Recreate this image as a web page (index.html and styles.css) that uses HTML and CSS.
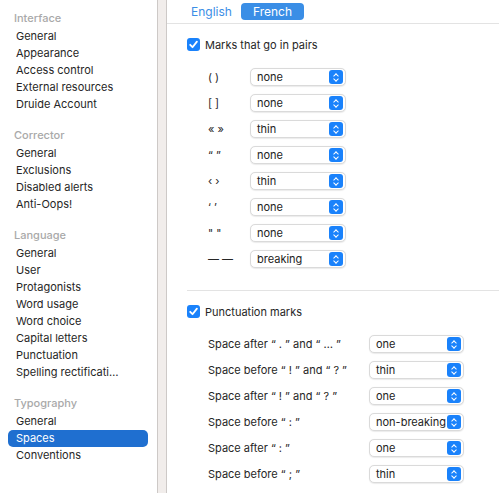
FILE: index.html
```html
<!DOCTYPE html>
<html>
<head>
<meta charset="utf-8">
<link rel="stylesheet" href="styles.css">
</head>
<body>
<div class="window">
  <nav class="sidebar">
    <div class="group">
      <div class="group-title">Interface</div>
      <div class="item">General</div>
      <div class="item">Appearance</div>
      <div class="item">Access control</div>
      <div class="item">External resources</div>
      <div class="item">Druide Account</div>
    </div>
    <div class="group">
      <div class="group-title">Corrector</div>
      <div class="item">General</div>
      <div class="item">Exclusions</div>
      <div class="item">Disabled alerts</div>
      <div class="item">Anti-Oops!</div>
    </div>
    <div class="group">
      <div class="group-title">Language</div>
      <div class="item">General</div>
      <div class="item">User</div>
      <div class="item">Protagonists</div>
      <div class="item">Word usage</div>
      <div class="item">Word choice</div>
      <div class="item">Capital letters</div>
      <div class="item">Punctuation</div>
      <div class="item">Spelling rectificati…</div>
    </div>
    <div class="group">
      <div class="group-title">Typography</div>
      <div class="item">General</div>
      <div class="item selected">Spaces</div>
      <div class="item">Conventions</div>
    </div>
  </nav>
  <div class="gutter"></div>
  <main class="main">
    <div class="tabs">
      <span class="tab">English</span>
      <span class="tab active">French</span>
    </div>
    <section class="section">
      <label class="check-row"><span class="checkbox"><svg viewBox="0 0 13 13" width="13" height="13"><path d="M3.2 6.8 L5.5 9.2 L9.9 3.6" fill="none" stroke="#fff" stroke-width="1.8" stroke-linecap="round" stroke-linejoin="round"/></svg></span>Marks that go in pairs</label>
      <div class="grid pairs">
        <span class="lbl">( )</span><div class="select"><span>none</span><i class="stepper"></i></div>
        <span class="lbl">[ ]</span><div class="select"><span>none</span><i class="stepper"></i></div>
        <span class="lbl">« »</span><div class="select"><span>thin</span><i class="stepper"></i></div>
        <span class="lbl">“ ”</span><div class="select"><span>none</span><i class="stepper"></i></div>
        <span class="lbl">‹ ›</span><div class="select"><span>thin</span><i class="stepper"></i></div>
        <span class="lbl">‘ ’</span><div class="select"><span>none</span><i class="stepper"></i></div>
        <span class="lbl">" "</span><div class="select"><span>none</span><i class="stepper"></i></div>
        <span class="lbl">— —</span><div class="select"><span>breaking</span><i class="stepper"></i></div>
      </div>
    </section>
    <section class="section second">
      <label class="check-row"><span class="checkbox"><svg viewBox="0 0 13 13" width="13" height="13"><path d="M3.2 6.8 L5.5 9.2 L9.9 3.6" fill="none" stroke="#fff" stroke-width="1.8" stroke-linecap="round" stroke-linejoin="round"/></svg></span>Punctuation marks</label>
      <div class="grid punct">
        <span class="lbl">Space after “ . ” and “ … ”</span><div class="select"><span>one</span><i class="stepper"></i></div>
        <span class="lbl">Space before “ ! ” and “ ? ”</span><div class="select"><span>thin</span><i class="stepper"></i></div>
        <span class="lbl">Space after “ ! ” and “ ? ”</span><div class="select"><span>one</span><i class="stepper"></i></div>
        <span class="lbl">Space before “ : ”</span><div class="select"><span>non-breaking</span><i class="stepper"></i></div>
        <span class="lbl">Space after “ : ”</span><div class="select"><span>one</span><i class="stepper"></i></div>
        <span class="lbl">Space before “ ; ”</span><div class="select"><span>thin</span><i class="stepper"></i></div>
      </div>
    </section>
  </main>
</div>
</body>
</html>
```
FILE: styles.css
```css
* { box-sizing: border-box; }
html, body { margin: 0; padding: 0; background: #fff; }
body {
  font-family: Inter, "Noto Sans", "Liberation Sans", sans-serif;
  font-size: 11px;
  color: #262626;
}
.window { display: flex; height: 493px; width: 499px; overflow: hidden; }
.sidebar {
  width: 158px;
  flex: none;
  border-right: 1px solid #cdc9c7;
  padding-top: 10px;
}
.group { margin-bottom: 14px; }
.group-title {
  height: 17px;
  line-height: 17px;
  margin-bottom: 1px;
  padding-left: 14px;
  color: #a9a9a9;
  font-weight: 500;
}
.item {
  height: 17px;
  line-height: 17px;
  margin: 0 9px 0 8px;
  padding-left: 8px;
  border-radius: 5px;
  white-space: nowrap;
}
.item.selected { background: #1f6fd0; color: #fff; }
.gutter {
  width: 9px;
  flex: none;
  background: #f1edeb;
  border-right: 1px solid #cdc9c7;
}
.main { flex: 1; min-width: 0; }
.tabs {
  height: 24px;
  border-bottom: 1px solid #e3e3e3;
  display: flex;
  align-items: center;
  padding-left: 18px;
  gap: 3px;
}
.tab {
  height: 17px;
  line-height: 17px;
  padding: 0 6px;
  color: #3b8ee6;
  font-size: 12px;
  border-radius: 4px;
}
.tab.active { background: #3a8ee6; color: #fff; padding: 0 12px; }
.section { padding-left: 20px; }
.check-row {
  display: flex;
  align-items: center;
  gap: 5px;
  height: 17px;
  margin-top: 12px;
}
.checkbox {
  width: 13px;
  height: 13px;
  border-radius: 3px;
  background: #1a82fb;
  display: inline-flex;
}
.grid {
  display: grid;
  row-gap: 8px;
  padding-left: 21px;
  align-items: center;
}
.pairs { grid-template-columns: 42px 96px; margin-top: 15px; }
.punct { grid-template-columns: 161px 95px; margin-top: 15px; }
.lbl { white-space: nowrap; }
.second {
  margin-left: 20px;
  padding-left: 0;
  margin-top: 22px;
  border-top: 1px solid #e3e3e3;
}
.second .check-row { margin-top: 12px; }
.select {
  height: 18px;
  border: 1px solid #dadada;
  border-radius: 5px;
  box-shadow: 0 0.5px 1px rgba(0,0,0,0.08);
  background: #fff;
  display: flex;
  align-items: center;
  justify-content: space-between;
  padding: 0 2px 0 6px;
  font-size: 11px;
  color: #222;
  white-space: nowrap;
  overflow: hidden;
}
.stepper {
  flex: none;
  width: 14px;
  height: 14px;
  border-radius: 3px;
  background: #1a82fb;
  position: relative;
}
.stepper::before, .stepper::after {
  content: "";
  position: absolute;
  left: 5px;
  width: 3px;
  height: 3px;
  border-left: 1.3px solid #fff;
  border-top: 1.3px solid #fff;
}
.stepper::before { top: 3.5px; transform: rotate(45deg); }
.stepper::after { top: 7px; transform: rotate(225deg); }
```
